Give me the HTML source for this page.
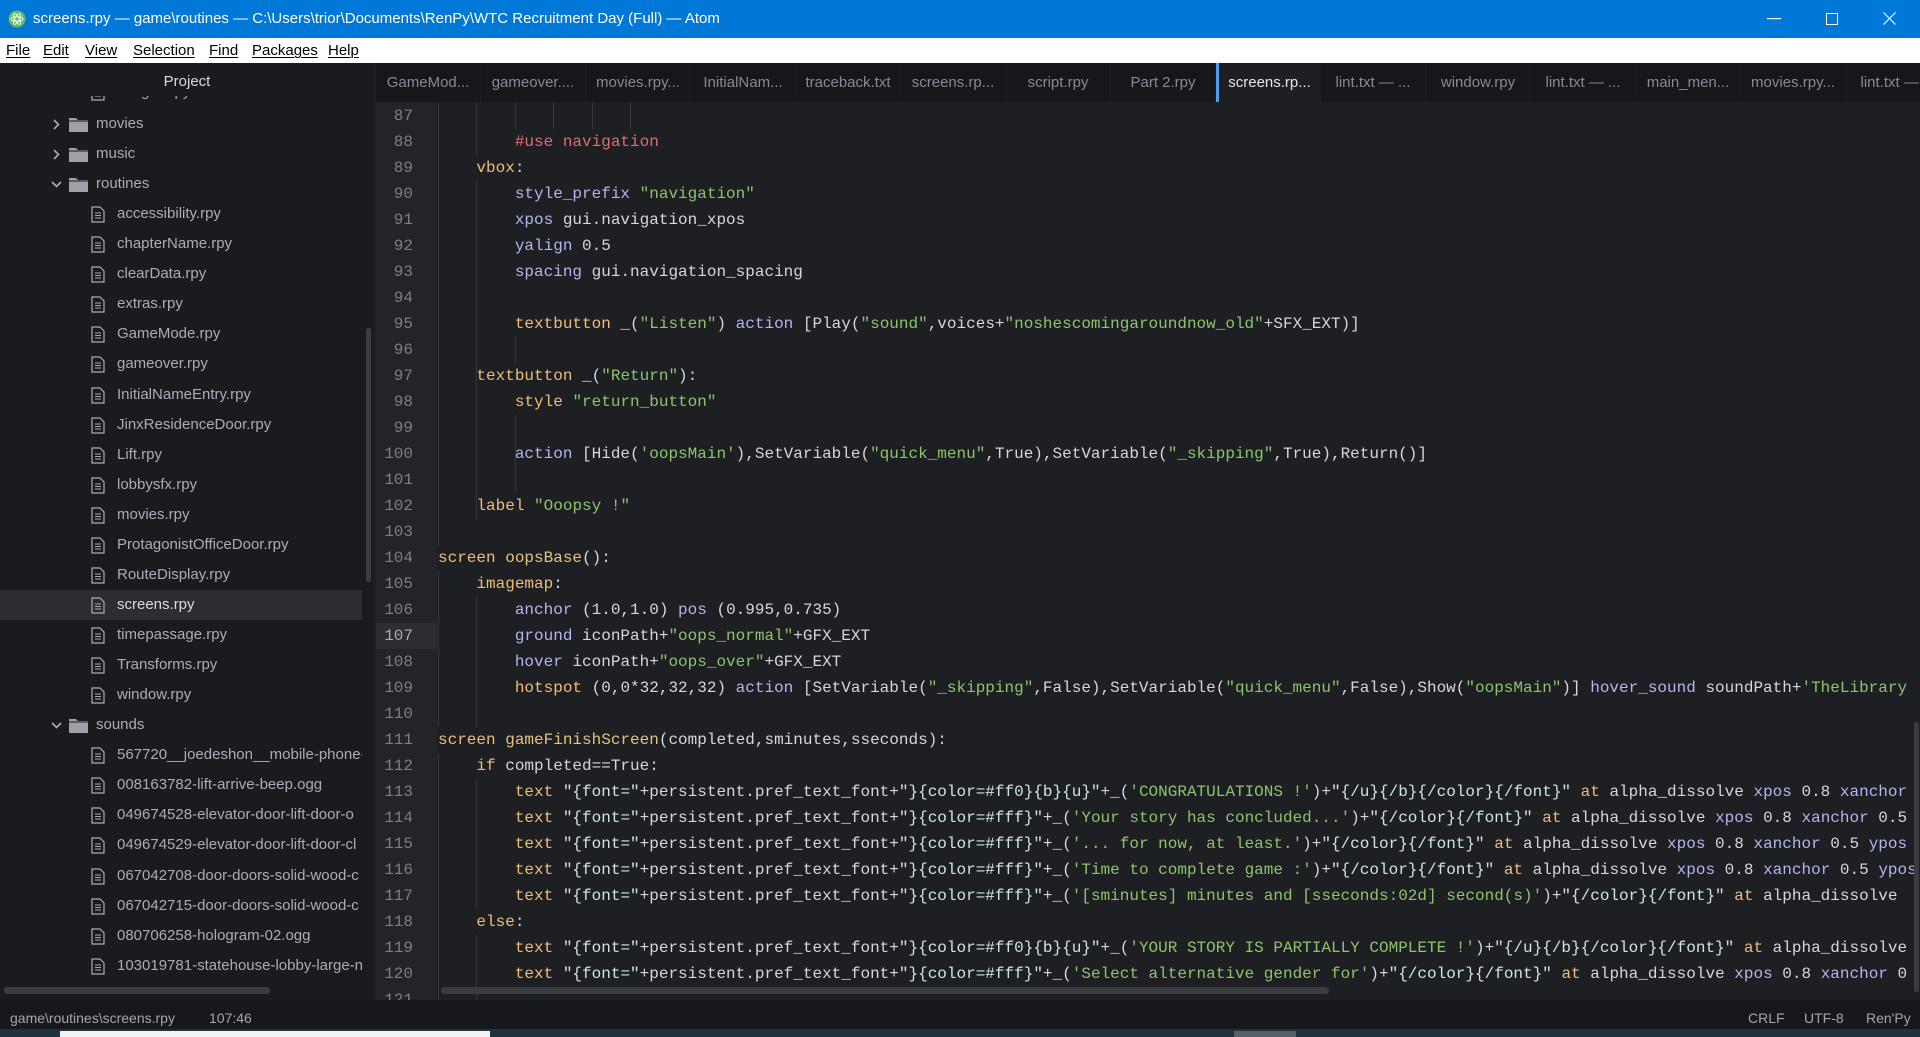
<!DOCTYPE html>
<html><head><meta charset="utf-8">
<style>
*{margin:0;padding:0;box-sizing:border-box}
body{width:1920px;height:1037px;overflow:hidden;background:#1e1f22;font-family:"Liberation Sans",sans-serif;position:relative}
#title{position:absolute;left:0;top:0;width:1920px;height:38px;background:#0078d7;color:#fff;font-size:15px;line-height:38px}
#title .t{position:absolute;left:33px;top:0}
#menu{position:absolute;left:0;top:38px;width:1920px;height:25px;background:#fff;color:#000;font-size:15px;line-height:25px}
#menu span{position:absolute;top:0;text-decoration:underline;text-decoration-thickness:1px;text-underline-offset:2px}
#side{position:absolute;left:0;top:63px;width:374px;height:937px;background:#1a1b1e;overflow:hidden}
#side .hd{position:absolute;left:0;top:0;width:374px;height:33px;line-height:38px;text-align:center;color:#d7dae0;font-size:15px;background:#1a1b1e;z-index:2}
.row{position:absolute;left:0;width:362px;height:30px;line-height:30px;color:#a9aeb6;font-size:15px;white-space:nowrap;overflow:hidden}
.row.sel{background:#2c2d31;color:#d8dbe0}
.row .tx{position:absolute;top:0}
#tabs{position:absolute;left:376px;top:63px;width:1544px;height:39px;background:#16171a}
.tab{position:absolute;top:0;width:105px;height:39px;line-height:39px;text-align:center;color:#868a92;font-size:15px;border-right:1px solid #1c1d20;white-space:nowrap;overflow:hidden}
.tab.act{background:#1e1f22;color:#e4e6ea;border-left:3px solid #4d9cf0}
#gut{position:absolute;left:376px;top:102px;width:61px;height:898px;background:#232428}
#code{position:absolute;left:376px;top:103px;width:1544px;height:897px;overflow:hidden;font-family:"Liberation Mono",monospace;font-size:16px}
.ln{position:absolute;left:0;width:61px;height:26px;line-height:26px;text-align:right;padding-right:24px;color:#7b7f87}
.ln.cur{background:#2c2d31;color:#a8acb3}
.cl{position:absolute;left:62px;height:26px;line-height:26px;white-space:pre;color:#d4d7dc}
.g{position:absolute;width:1px;background:#34363b}
.k{color:#eebd7a}.p{color:#b3b5ee}.s{color:#8cc46c}.c{color:#e06c75}.w{color:#cfe4e6}.f{color:#e6c27e}
#status{position:absolute;left:0;top:1000px;width:1920px;height:29px;background:#17181b;color:#a3a7ae;font-size:14px;line-height:37px}
#task{position:absolute;left:0;top:1029px;width:1920px;height:8px;background:#1d3340}
</style></head><body>
<div id="title">
<svg style="position:absolute;left:8px;top:10px" width="18" height="18" viewBox="0 0 18 18"><circle cx="9" cy="9" r="8.5" fill="#66bb6a"/><g fill="none" stroke="#e8f5e9" stroke-width="1"><ellipse cx="9" cy="9" rx="6" ry="2.3"/><ellipse cx="9" cy="9" rx="6" ry="2.3" transform="rotate(60 9 9)"/><ellipse cx="9" cy="9" rx="6" ry="2.3" transform="rotate(-60 9 9)"/></g></svg>
<span class="t">screens.rpy — game\routines — C:\Users\trior\Documents\RenPy\WTC Recruitment Day (Full) — Atom</span>
<svg style="position:absolute;left:1767px;top:18px" width="14" height="2"><rect width="14" height="1.2" fill="#fff"/></svg>
<svg style="position:absolute;left:1826px;top:13px" width="12" height="12"><rect x="0.5" y="0.5" width="11" height="11" fill="none" stroke="#fff" stroke-width="1"/></svg>
<svg style="position:absolute;left:1883px;top:12px" width="13" height="13"><path d="M0.5 0.5L12.5 12.5M12.5 0.5L0.5 12.5" stroke="#fff" stroke-width="1.2"/></svg>
</div>
<div id="menu">
<span style="left:6px">File</span><span style="left:43px">Edit</span><span style="left:85px">View</span><span style="left:133px">Selection</span><span style="left:209px">Find</span><span style="left:252px">Packages</span><span style="left:328px">Help</span>
</div>
<div id="side">
<div class="hd">Project</div>
<div id="rows"></div>
<div style="position:absolute;left:366px;top:265px;width:5px;height:254px;background:#3a3c41;border-radius:2px"></div>
<div style="position:absolute;left:4px;top:924px;width:266px;height:7px;background:#3a3c41;border-radius:3px"></div>
</div>
<div id="tabs"></div>
<div id="gut"></div>
<div id="code"></div>
<div style="position:absolute;left:441px;top:987px;width:888px;height:7px;background:#3a3c41;border-radius:3px"></div>
<div style="position:absolute;left:1914px;top:722px;width:5px;height:270px;background:#3a3c41;border-radius:2px"></div>
<div id="status">
<span style="position:absolute;left:10px">game\routines\screens.rpy</span>
<span style="position:absolute;left:209px">107:46</span>
<span style="position:absolute;left:1748px">CRLF</span>
<span style="position:absolute;left:1804px">UTF-8</span>
<span style="position:absolute;left:1866px">Ren'Py</span>
</div>
<div id="task"><div style="position:absolute;left:60px;top:2px;width:430px;height:6px;background:#f2f2f2"></div><div style="position:absolute;left:1234px;top:2px;width:62px;height:6px;background:#566068"></div></div>
<script>
(function(){
var folder='<svg style="position:absolute;left:69px;top:8px" width="19" height="15" viewBox="0 0 19 15"><path d="M0 1h7l2 2h10v12H0z" fill="#9ea1a8"/><path d="M0 4h19" stroke="#1a1b1e" stroke-width="1"/></svg>';
var file='<svg style="position:absolute;left:91px;top:7px" width="14" height="17" viewBox="0 0 14 17"><path d="M1 1h8l4 4v11H1z" fill="none" stroke="#a9aeb6" stroke-width="1.2"/><path d="M4 7h6M4 9.5h6M4 12h6" stroke="#a9aeb6" stroke-width="1"/></svg>';
function chev(open){return open?'<svg style="position:absolute;left:51px;top:12px" width="11" height="8"><path d="M1 1l4.5 4.5L10 1" fill="none" stroke="#a9aeb6" stroke-width="1.6"/></svg>':'<svg style="position:absolute;left:53px;top:10px" width="8" height="11"><path d="M1 1l4.5 4.5L1 10" fill="none" stroke="#a9aeb6" stroke-width="1.6"/></svg>';}
var items=[["f","movies",0],["f","music",0],["f","routines",1],["x","accessibility.rpy"],["x","chapterName.rpy"],["x","clearData.rpy"],["x","extras.rpy"],["x","GameMode.rpy"],["x","gameover.rpy"],["x","InitialNameEntry.rpy"],["x","JinxResidenceDoor.rpy"],["x","Lift.rpy"],["x","lobbysfx.rpy"],["x","movies.rpy"],["x","ProtagonistOfficeDoor.rpy"],["x","RouteDisplay.rpy"],["x","screens.rpy"],["x","timepassage.rpy"],["x","Transforms.rpy"],["x","window.rpy"],["f","sounds",1],["x","567720__joedeshon__mobile-phone-b"],["x","008163782-lift-arrive-beep.ogg"],["x","049674528-elevator-door-lift-door-o"],["x","049674529-elevator-door-lift-door-cl"],["x","067042708-door-doors-solid-wood-c"],["x","067042715-door-doors-solid-wood-c"],["x","080706258-hologram-02.ogg"],["x","103019781-statehouse-lobby-large-n"]];
var h='<div class="row" style="top:14px">'+file+'<span class="tx" style="left:117px">images.rpy</span></div>';
items.forEach(function(it,i){var tp=46+i*30.06;var sel=it[1]=="screens.rpy";
h+='<div class="row'+(sel?' sel':'')+'" style="top:'+tp+'px">';
if(it[0]=="f"){h+=chev(it[2])+folder+'<span class="tx" style="left:96px">'+it[1]+'</span>';}
else{h+=file+'<span class="tx" style="left:117px">'+it[1]+'</span>';}
h+='</div>';});
document.getElementById('rows').innerHTML=h;
var tabs=["GameMod...","gameover....","movies.rpy...","InitialNam...","traceback.txt","screens.rp...","script.rpy","Part 2.rpy","screens.rp...","lint.txt — ...","window.rpy","lint.txt — ...","main_men...","movies.rpy...","lint.txt — ..."];
var t='';tabs.forEach(function(n,i){t+='<div class="tab'+(i==8?' act':'')+'" style="left:'+(i*105)+'px">'+n+'</div>';});
document.getElementById('tabs').innerHTML=t;
function e(s){return s.replace(/&/g,'&amp;').replace(/</g,'&lt;');}
function K(s){return '<span class="k">'+e(s)+'</span>';}function P(s){return '<span class="p">'+e(s)+'</span>';}function S(s){return '<span class="s">'+e(s)+'</span>';}function W(s){return '<span class="w">'+e(s)+'</span>';}function N(s){return e(s);}
var FT=W('"{font="')+N('+persistent.pref_text_font+')+W('"}{color=#ff0}{b}{u}"')+N('+_(');
var FW=W('"{font="')+N('+persistent.pref_text_font+')+W('"}{color=#fff}"')+N('+_(');
var lines={
87:'',
88:'        <span class="c">#use navigation</span>',
89:'    '+K('vbox')+':',
90:'        '+P('style_prefix')+' '+S('"navigation"'),
91:'        '+P('xpos')+' gui.navigation_xpos',
92:'        '+P('yalign')+' 0.5',
93:'        '+P('spacing')+' gui.navigation_spacing',
94:'',
95:'        '+K('textbutton')+' _('+S('"Listen"')+') '+P('action')+' [Play('+S('"sound"')+',voices+'+S('"noshescomingaroundnow_old"')+'+SFX_EXT)]',
96:'',
97:'    '+K('textbutton')+' _('+S('"Return"')+'):',
98:'        '+K('style')+' '+S('"return_button"'),
99:'',
100:'        '+P('action')+' [Hide('+S("'oopsMain'")+'),SetVariable('+S('"quick_menu"')+',True),SetVariable('+S('"_skipping"')+',True),Return()]',
101:'',
102:'    '+K('label')+' '+S('"Ooopsy !"'),
103:'',
104:K('screen')+' <span class="f">oopsBase</span>():',
105:'    '+K('imagemap')+':',
106:'        '+P('anchor')+' (1.0,1.0) '+P('pos')+' (0.995,0.735)',
107:'        '+P('ground')+' iconPath+'+S('"oops_normal"')+'+GFX_EXT',
108:'        '+P('hover')+' iconPath+'+S('"oops_over"')+'+GFX_EXT',
109:'        '+K('hotspot')+' (0,0*32,32,32) '+P('action')+' [SetVariable('+S('"_skipping"')+',False),SetVariable('+S('"quick_menu"')+',False),Show('+S('"oopsMain"')+')] '+P('hover_sound')+' soundPath+'+S("'TheLibrary"),
110:'',
111:K('screen')+' <span class="f">gameFinishScreen</span>(completed,sminutes,sseconds):',
112:'    '+K('if')+' completed==True:',
113:'        '+K('text')+' '+FT+S("'CONGRATULATIONS !'")+')+'+W('"{/u}{/b}{/color}{/font}"')+' '+K('at')+' alpha_dissolve '+P('xpos')+' 0.8 '+P('xanchor'),
114:'        '+K('text')+' '+FW+S("'Your story has concluded...'")+')+'+W('"{/color}{/font}"')+' '+K('at')+' alpha_dissolve '+P('xpos')+' 0.8 '+P('xanchor')+' 0.5',
115:'        '+K('text')+' '+FW+S("'... for now, at least.'")+')+'+W('"{/color}{/font}"')+' '+K('at')+' alpha_dissolve '+P('xpos')+' 0.8 '+P('xanchor')+' 0.5 '+P('ypos'),
116:'        '+K('text')+' '+FW+S("'Time to complete game :'")+')+'+W('"{/color}{/font}"')+' '+K('at')+' alpha_dissolve '+P('xpos')+' 0.8 '+P('xanchor')+' 0.5 '+P('ypos'),
117:'        '+K('text')+' '+FW+S("'[sminutes] minutes and [sseconds:02d] second(s)'")+')+'+W('"{/color}{/font}"')+' '+K('at')+' alpha_dissolve',
118:'    '+K('else')+':',
119:'        '+K('text')+' '+FT+S("'YOUR STORY IS PARTIALLY COMPLETE !'")+')+'+W('"{/u}{/b}{/color}{/font}"')+' '+K('at')+' alpha_dissolve',
120:'        '+K('text')+' '+FW+S("'Select alternative gender for'")+')+'+W('"{/color}{/font}"')+' '+K('at')+' alpha_dissolve '+P('xpos')+' 0.8 '+P('xanchor')+' 0',
121:''};
var c='';
for(var n=87;n<=121;n++){var tp=(n-87)*26;c+='<div class="ln'+(n==107?' cur':'')+'" style="top:'+tp+'px">'+n+'</div><div class="cl" style="top:'+tp+'px">'+lines[n]+'</div>';}
function g(col,from,to){c+='<div class="g" style="left:'+(62+col*9.6)+'px;top:'+((from-87)*26)+'px;height:'+((to-from+1)*26)+'px"></div>';}
g(0,87,103);g(4,87,88);g(4,90,102);g(8,87,87);g(12,87,87);g(16,87,87);g(20,87,87);g(8,96,96);g(8,99,101);
g(0,105,110);g(4,106,110);g(0,112,121);g(4,113,117);g(4,119,121);
document.getElementById('code').innerHTML=c;
})();
</script>
</body></html>
